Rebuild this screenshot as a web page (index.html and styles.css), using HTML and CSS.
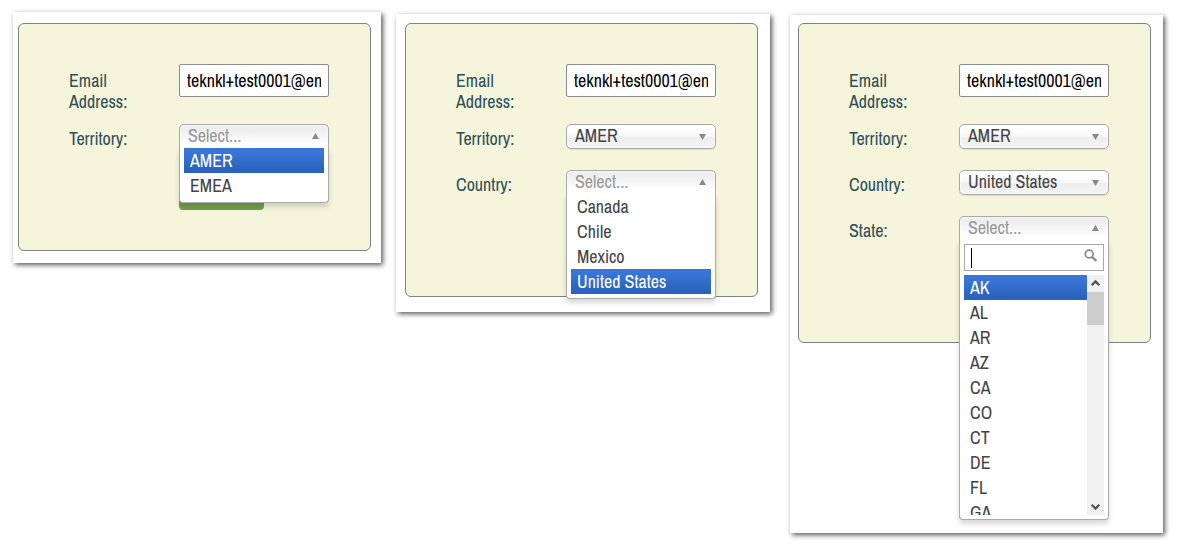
FILE: index.html
```
<!DOCTYPE html>
<html lang="en">
<head>
    <meta charset="UTF-8">
    <meta name="viewport" content="width=device-width, initial-scale=1.0">
    <title>Territory / Country / State</title>
    <link rel="stylesheet" href="styles.css">
</head>
<body>
    <div class="steps">
        <div class="panel panel-territory">
            <form class="form">
                <div class="row row-email">
                    <label>Email Address:</label>
                    <div class="email"><span>teknkl+test0001@en</span></div>
                </div>
                <div class="row">
                    <label>Territory:</label>
                    <div class="select open">
                        <span class="text">Select...</span><i class="arrow"></i>
                        <div class="drop">
                            <ul>
                                <li class="active">AMER</li>
                                <li>EMEA</li>
                            </ul>
                        </div>
                    </div>
                </div>
                <div class="button"></div>
            </form>
        </div>

        <div class="panel panel-country">
            <form class="form">
                <div class="row row-email">
                    <label>Email Address:</label>
                    <div class="email"><span>teknkl+test0001@en</span></div>
                </div>
                <div class="row">
                    <label>Territory:</label>
                    <div class="select"><span class="text">AMER</span><i class="arrow"></i></div>
                </div>
                <div class="row">
                    <label>Country:</label>
                    <div class="select open">
                        <span class="text">Select...</span><i class="arrow"></i>
                        <div class="drop">
                            <ul>
                                <li>Canada</li>
                                <li>Chile</li>
                                <li>Mexico</li>
                                <li class="active">United States</li>
                            </ul>
                        </div>
                    </div>
                </div>
                <div class="button"></div>
            </form>
        </div>

        <div class="panel panel-state">
            <form class="form">
                <div class="row row-email">
                    <label>Email Address:</label>
                    <div class="email"><span>teknkl+test0001@en</span></div>
                </div>
                <div class="row">
                    <label>Territory:</label>
                    <div class="select"><span class="text">AMER</span><i class="arrow"></i></div>
                </div>
                <div class="row">
                    <label>Country:</label>
                    <div class="select"><span class="text">United States</span><i class="arrow"></i></div>
                </div>
                <div class="row">
                    <label>State:</label>
                    <div class="select open">
                        <span class="text">Select...</span><i class="arrow"></i>
                        <div class="drop">
                            <div class="search">
                                <span class="caret"></span>
                                <svg width="14" height="14" viewBox="0 0 14 14" fill="none" stroke="#888">
                                    <circle cx="5.2" cy="5" r="3.9" stroke-width="1.7"/>
                                    <path d="M8 7.8l4.4 4.2" stroke-width="2.3"/>
                                </svg>
                            </div>
                            <div class="results">
                                <ul>
                                    <li class="active">AK</li>
                                    <li>AL</li>
                                    <li>AR</li>
                                    <li>AZ</li>
                                    <li>CA</li>
                                    <li>CO</li>
                                    <li>CT</li>
                                    <li>DE</li>
                                    <li>FL</li>
                                    <li>GA</li>
                                </ul>
                                <div class="scrollbar">
                                    <svg width="17" height="17" viewBox="0 0 17 17" fill="none" stroke="#505050" stroke-width="2.2"><path d="M4.7 10.2l3.8-3.8 3.8 3.8"/></svg>
                                    <div class="thumb"></div>
                                    <svg width="17" height="17" viewBox="0 0 17 17" fill="none" stroke="#505050" stroke-width="2.2"><path d="M4.7 6.8l3.8 3.8 3.8-3.8"/></svg>
                                </div>
                            </div>
                        </div>
                    </div>
                </div>
                <div class="button"></div>
            </form>
        </div>
    </div>
</body>
</html>
```
FILE: styles.css
```
* {
    box-sizing: border-box;
}
body {
    margin: 0;
    height: 554px;
    overflow: hidden;
    background: #fff;
    font-family: 'Archivo Narrow', 'Liberation Sans Narrow', 'Liberation Sans', sans-serif;
    font-size: 18px;
    line-height: 21px;
    color: #444;
}
.steps {
    display: flex;
    align-items: flex-start;
    padding-left: 13px;
}
.panel {
    flex: none;
    background: #fff;
    box-shadow: 2px 2px 5px rgba(0, 0, 0, 0.65);
}
.panel-territory {
    width: 368px;
    height: 251px;
    margin-top: 12px;
    padding: 11px 0 0 5px;
}
.panel-country {
    width: 374px;
    height: 298px;
    margin: 14px 0 0 15px;
    padding: 9px 0 0 9px;
}
.panel-state {
    width: 373px;
    height: 518px;
    margin: 15px 0 0 20px;
    padding: 8px 0 0 8px;
}
.form {
    width: 353px;
    padding: 40px 0 40px 50px;
    background: #f5f5dc;
    border: 1px solid #808080;
    border-radius: 6px;
}
.row {
    display: flex;
    height: 46px;
}
.row-email {
    height: 60px;
}
label {
    width: 110px;
    padding: 4px 40px 0 0;
    color: #2f4f56;
}
.row-email label {
    padding-top: 6px;
}
.email {
    width: 150px;
    height: 33px;
    padding: 0 7px;
    border: 1px solid #8c8c8c;
    border-radius: 2px;
    background: #fff;
    color: #000;
    line-height: 32px;
    white-space: nowrap;
}
.email span {
    display: block;
    overflow: hidden;
}
.select {
    position: relative;
    display: flex;
    justify-content: space-between;
    width: 150px;
    height: 25px;
    padding: 0 9px 0 8px;
    border: 1px solid #aaa;
    border-radius: 5px;
    background: linear-gradient(#fff 20%, #f6f6f6 50%, #eee 52%, #f4f4f4 100%);
    box-shadow: 0 0 3px #fff inset, 0 1px 1px rgba(0, 0, 0, 0.1);
    line-height: 22px;
    white-space: nowrap;
}
.arrow {
    width: 7px;
    height: 6px;
    margin-top: 9px;
    background: #888;
    clip-path: polygon(0 0, 100% 0, 50% 100%);
}
.select.open {
    border-bottom: 0;
    border-radius: 5px 5px 0 0;
    background: linear-gradient(#eee 20%, #fff 80%);
    color: #999;
}
.open .arrow {
    margin-top: 8px;
    clip-path: polygon(50% 0, 100% 100%, 0 100%);
}
.drop {
    position: absolute;
    top: 23px;
    left: -1px;
    z-index: 2;
    width: 150px;
    padding: 0 4px 4px;
    border: 1px solid #aaa;
    border-top: 0;
    border-radius: 0 0 4px 4px;
    background: #fff;
    box-shadow: 0 4px 5px rgba(0, 0, 0, 0.15);
    color: #444;
}
ul {
    flex: 1;
    margin: 0;
    padding: 0;
    list-style: none;
}
li {
    height: 25px;
    padding-left: 6px;
    line-height: 26px;
}
li.active {
    background: linear-gradient(#3875d7 20%, #2a62bc 90%);
    color: #fff;
}
.search {
    display: flex;
    justify-content: space-between;
    height: 27px;
    margin: 4px 0;
    padding: 3px 5px 3px 6px;
    border: 1px solid #aaa;
    background: #fff;
}
.caret {
    width: 1px;
    height: 20px;
    background: #000;
}
.search svg {
    margin-top: 1px;
}
.results {
    display: flex;
    height: 240px;
    overflow: hidden;
}
.scrollbar {
    display: flex;
    flex-direction: column;
    width: 17px;
    background: #f0f0f0;
}
.thumb {
    height: 33px;
    margin-bottom: auto;
    background: #cdcdcd;
}
.button {
    width: 85px;
    height: 40px;
    margin-left: 110px;
    border-radius: 4px;
    background: #70a24a;
}
```
